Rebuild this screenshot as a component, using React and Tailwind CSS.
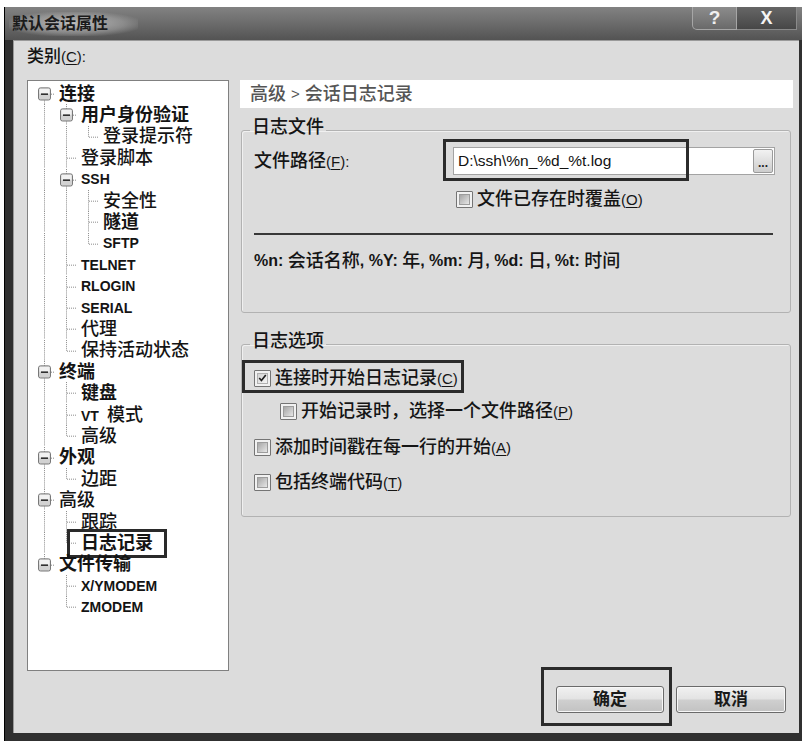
import React from 'react';

const TREE = [
  {
    label: '连接', bold: true, children: [
      { label: '用户身份验证', bold: true, children: [{ label: '登录提示符' }] },
      { label: '登录脚本' },
      {
        label: 'SSH', latin: true, children: [
          { label: '安全性' },
          { label: '隧道', bold: true },
          { label: 'SFTP', latin: true },
        ],
      },
      { label: 'TELNET', latin: true },
      { label: 'RLOGIN', latin: true },
      { label: 'SERIAL', latin: true },
      { label: '代理' },
      { label: '保持活动状态' },
    ],
  },
  {
    label: '终端', bold: true, children: [
      { label: '键盘', bold: true },
      { label: 'VT 模式', vt: true },
      { label: '高级' },
    ],
  },
  { label: '外观', bold: true, children: [{ label: '边距' }] },
  { label: '高级', children: [{ label: '跟踪' }, { label: '日志记录', bold: true, selected: true }] },
  {
    label: '文件传输', bold: true, children: [
      { label: 'X/YMODEM', latin: true },
      { label: 'ZMODEM', latin: true },
    ],
  },
];

function flatten(nodes, ancestors = [], out = [], depth = 0) {
  nodes.forEach((n, i) => {
    const last = i === nodes.length - 1;
    out.push({ ...n, ancestors, last, first: i === 0, depth, hasChildren: !!n.children });
    if (n.children) flatten(n.children, [...ancestors, last], out, depth + 1);
  });
  return out;
}

const ROWS = flatten(TREE);

// mnemonic like (C)
const Mn = ({ k, colon }) => (
  <span className="text-[15px]">
    (<span className="underline underline-offset-2">{k}</span>){colon ? ':' : ''}
  </span>
);

function Line({ x1, y1, x2, y2 }) {
  return <line x1={x1} y1={y1} x2={x2} y2={y2} stroke="#8a8a8a" strokeWidth="1" strokeDasharray="1 1" />;
}

function TreeRow({ row }) {
  return (
    <div className="flex h-[21.4px] items-center">
      {row.ancestors.map((last, i) => (
        <svg key={i} className="h-full w-[22px] shrink-0" viewBox="0 0 22 22" preserveAspectRatio="none">
          {!last && <Line x1="11.5" y1="0" x2="11.5" y2="22" />}
        </svg>
      ))}
      <svg className="h-full w-[22px] shrink-0" viewBox="0 0 22 22" preserveAspectRatio="none">
        <Line x1="11.5" y1={row.depth === 0 && row.first ? 11 : 0} x2="11.5" y2={row.last ? 11.5 : 22} />
        <Line x1="12" y1="11.5" x2="21" y2="11.5" />
        {row.hasChildren && (
          <g>
            <rect x="5.5" y="5" width="12" height="12.5" rx="2" fill="#d2d2d2" stroke="#767676" />
            <rect x="6.5" y="6" width="10" height="5" fill="#f2f2f2" />
            <line x1="8" y1="11.5" x2="15" y2="11.5" stroke="#2a2a2a" strokeWidth="1.6" />
          </g>
        )}
      </svg>
      <span
        className={
          'relative ml-[4px] whitespace-nowrap leading-none text-[#141414] ' +
          (row.latin ? 'text-[14px] font-bold' : row.bold ? 'text-[18px] font-bold' : 'text-[18px] font-medium')
        }
      >
        {row.vt ? (
          <>
            <span className="text-[14px] font-bold">VT</span>
            <span className="ml-[8px]">模式</span>
          </>
        ) : (
          row.label
        )}
        {row.selected && (
          <span className="absolute -left-[14px] -right-[14px] -top-[5px] -bottom-[6px] border-[3px] border-[#2a2a2a]" />
        )}
      </span>
    </div>
  );
}

function CheckBox({ checked }) {
  return (
    <span className="flex h-[17px] w-[17px] shrink-0 items-center justify-center rounded-[1px] border border-[#747474] bg-[#f1f1f1] p-[2px]">
      <span
        className={
          'flex h-full w-full items-center justify-center border ' +
          (checked
            ? 'border-[#b0b0b0] bg-[linear-gradient(135deg,#d2d2d2,#f5f5f5)]'
            : 'border-[#9c9c9c] bg-[linear-gradient(135deg,#a6a6a6,#e6e6e6)]')
        }
      >
        {checked && (
          <svg width="12" height="12" viewBox="0 0 11 11">
            <path d="M1.5 5.5 L4.2 8.6 L9.5 1.8" fill="none" stroke="#1f1f1f" strokeWidth="2" />
          </svg>
        )}
      </span>
    </span>
  );
}

function CheckRow({ checked, children, className = '' }) {
  return (
    <div className={'flex h-[20px] items-center gap-[4px] text-[18px] font-medium text-[#151515] ' + className}>
      <CheckBox checked={checked} />
      <span className="whitespace-nowrap leading-none">{children}</span>
    </div>
  );
}

function DlgButton({ children, width }) {
  return (
    <button
      type="button"
      className={
        'flex h-[27px] items-center justify-center rounded-[3px] border border-[#6a6a6a] bg-[linear-gradient(180deg,#f1f1f1_0%,#e3e3e3_48%,#cfcfcf_52%,#c2c2c2_100%)] text-[17px] font-bold text-[#1a1a1a] shadow-[inset_0_0_0_1px_#f7f7f7] ' +
        width
      }
    >
      {children}
    </button>
  );
}

export default function App() {
  return (
    <div className="h-[741px] w-[804px] overflow-hidden bg-white pl-[4px] pt-[7px] [font-family:'Liberation_Sans','Noto_Sans_CJK_SC',sans-serif]">
      <div className="flex h-[734px] w-[798px] flex-col border-l border-black bg-[#303030]">
        {/* Title bar */}
        <div className="flex h-[33px] shrink-0 items-start bg-[linear-gradient(180deg,#828282_0%,#696969_55%,#535353_100%)]">
          <div className="ml-[4px] mt-[5px] flex h-[24px] items-center bg-[radial-gradient(ellipse_at_center,rgba(215,215,215,0.75)_0%,rgba(200,200,200,0.35)_55%,transparent_78%)] px-[3px] pr-[30px]">
            <span className="text-[16px] font-bold leading-none text-[#1b1b1b]">默认会话属性</span>
          </div>
          <div className="ml-auto mr-[5px] flex h-[23px]">
            <div className="flex w-[45px] items-center justify-center rounded-bl-[5px] border border-t-0 border-[#a6a6a6] bg-[linear-gradient(180deg,#8c8c8c,#6a6a6a)] text-[19px] font-bold text-[#f0f0f0]">
              ?
            </div>
            <div className="flex w-[60px] items-center justify-center border-b border-r border-[#8a8a8a] bg-[linear-gradient(180deg,#666,#474747)] text-[18px] font-bold text-[#f4f4f4]">
              X
            </div>
          </div>
        </div>

        {/* Content */}
        <div className="mb-[8px] ml-[8px] mr-[3px] flex h-[693px] flex-col border-l border-t border-[#9a9a9a] bg-[#dcdcdc] pl-[13px] pr-[6px] pt-[5px]">
          <div className="flex h-[22px] items-center text-[17px] font-medium text-[#151515]">
            类别<Mn k="C" colon />
          </div>

          <div className="mt-[12px] flex h-[591px] gap-[11px]">
            {/* Category tree */}
            <div className="h-full w-[202px] shrink-0 border border-[#808080] bg-white pl-[5px] pt-[2px]">
              {ROWS.map((row, i) => (
                <TreeRow key={i} row={row} />
              ))}
            </div>

            {/* Right panel */}
            <div className="flex w-[553px] flex-col">
              <div className="flex h-[28px] items-center bg-white pl-[10px] text-[18px] font-medium text-[#555]">
                高级<span className="mx-[5px] text-[15px]">&gt;</span>会话日志记录
              </div>

              <fieldset className="ml-[1px] mt-[9px] w-[550px] rounded-[3px] border border-[#b2b2b2] px-[12px] pb-[41px] shadow-[inset_1px_1px_0_#f0f0f0]">
                <legend className="-ml-[4px] px-[2px] pb-[6px] text-[18px] font-medium leading-[20px] text-[#151515]">
                  日志文件
                </legend>
                <div className="mt-[4px] flex h-[28px] items-center">
                  <span className="w-[199px] text-[18px] font-medium text-[#151515]">
                    文件路径<Mn k="F" colon />
                  </span>
                  <div className="relative flex h-[28px] w-[322px] items-center border border-[#a3a3a3] bg-white pl-[4px]">
                    <span className="flex-1 text-[15.5px] font-medium text-[#111]">{'D:\\ssh\\%n_%d_%t.log'}</span>
                    <span className="mr-[1px] flex h-[24px] w-[20px] items-end justify-center rounded-[2px] border border-[#9a9a9a] bg-[linear-gradient(180deg,#f2f2f2,#cdcdcd)] pb-[3px] text-[12px] font-bold leading-none text-[#222]">
                      ...
                    </span>
                    <span className="absolute -left-[11px] -top-[9px] h-[42px] w-[246px] border-[3px] border-[#2b2b2b]" />
                  </div>
                </div>
                <CheckRow className="ml-[202px] mt-[14px]">
                  文件已存在时覆盖<Mn k="O" />
                </CheckRow>
                <div className="mt-[24px] h-[2px] w-[519px] bg-[#383838]" />
                <div className="mt-[16px] flex h-[20px] items-center whitespace-nowrap text-[16px] font-bold text-[#151515]">
                  %n:&nbsp;<span className="text-[18px] font-medium">会话名称</span>, %Y:&nbsp;
                  <span className="text-[18px] font-medium">年</span>, %m:&nbsp;
                  <span className="text-[18px] font-medium">月</span>, %d:&nbsp;
                  <span className="text-[18px] font-medium">日</span>, %t:&nbsp;
                  <span className="text-[18px] font-medium">时间</span>
                </div>
              </fieldset>

              <fieldset className="ml-[1px] mt-[18px] w-[550px] rounded-[3px] border border-[#b2b2b2] px-[12px] pb-[24px] shadow-[inset_1px_1px_0_#f0f0f0]">
                <legend className="-ml-[4px] px-[2px] pb-[6px] text-[18px] font-medium leading-[20px] text-[#151515]">
                  日志选项
                </legend>
                <div className="relative mt-[11px] w-fit">
                  <CheckRow checked>
                    连接时开始日志记录<Mn k="C" />
                  </CheckRow>
                  <span className="absolute -left-[12px] -right-[6px] -top-[8px] -bottom-[5px] border-[3px] border-[#2b2b2b]" />
                </div>
                <CheckRow className="ml-[26px] mt-[13px]">
                  开始记录时，选择一个文件路径<Mn k="P" />
                </CheckRow>
                <CheckRow className="mt-[16px]">
                  添加时间戳在每一行的开始<Mn k="A" />
                </CheckRow>
                <CheckRow className="mt-[15px]">
                  包括终端代码<Mn k="T" />
                </CheckRow>
              </fieldset>
            </div>
          </div>

          {/* Buttons */}
          <div className="mt-[15px] flex justify-end gap-[12px] pr-[7px]">
            <div className="relative">
              <DlgButton width="w-[108px]">确定</DlgButton>
              <span className="absolute -left-[15px] -top-[19px] h-[59px] w-[131px] border-[3px] border-[#2b2b2b]" />
            </div>
            <DlgButton width="w-[110px]">取消</DlgButton>
          </div>
        </div>
      </div>
    </div>
  );
}
